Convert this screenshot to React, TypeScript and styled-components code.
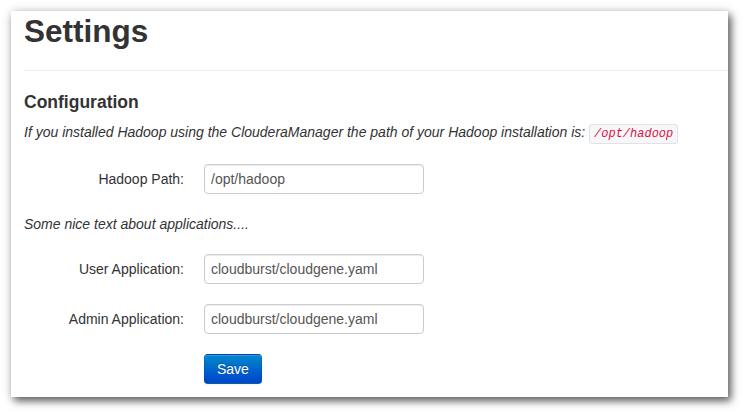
import React from "react";
import styled, { createGlobalStyle } from "styled-components";

const Global = createGlobalStyle`
  html, body { margin: 0; padding: 0; background: #ffffff; }
  body {
    font-family: "Liberation Sans", Arial, Helvetica, sans-serif;
    font-size: 14px;
    line-height: 20px;
    color: #333333;
  }
  * { box-sizing: border-box; }
`;

const Page = styled.div`
  padding: 11px 0 0 11px;
  width: 747px;
  height: 416px;
  overflow: hidden;
`;

const Panel = styled.div`
  width: 717px;
  height: 386px;
  background: #ffffff;
  padding-left: 13px;
  box-shadow: 3px 4px 8px rgba(0, 0, 0, 0.62), 0 0 10px rgba(0, 0, 0, 0.12);
  overflow: hidden;
`;

const PageHeader = styled.div`
  border-bottom: 1px solid #eeeeee;
  margin-bottom: 21px;
`;

const Title = styled.h2`
  margin: 0 0 10px;
  padding-bottom: 9px;
  font-size: 31.5px;
  line-height: 40px;
  font-weight: bold;
  color: #333333;
`;

const SectionTitle = styled.h4`
  margin: 0 0 10px;
  font-size: 17.5px;
  line-height: 20px;
  font-weight: bold;
  color: #333333;
`;

const Note = styled.p<{ $gap: number }>`
  margin: 0 0 ${(p) => p.$gap}px;
  font-style: italic;
`;

const Code = styled.code`
  font-family: "Liberation Mono", "Courier New", monospace;
  font-size: 12px;
  padding: 2px 4px;
  color: #dd1144;
  background: #f7f7f9;
  border: 1px solid #e1e1e8;
  border-radius: 3px;
`;

const ControlGroup = styled.div`
  display: flex;
  align-items: flex-start;
  margin-bottom: 20px;
`;

const Label = styled.label`
  width: 160px;
  padding-top: 5px;
  text-align: right;
  margin-right: 20px;
  color: #333333;
`;

const Input = styled.input`
  width: 220px;
  height: 30px;
  padding: 4px 6px;
  font-family: "Liberation Sans", Arial, sans-serif;
  font-size: 14px;
  line-height: 20px;
  color: #555555;
  background: #ffffff;
  border: 1px solid #cccccc;
  border-radius: 4px;
  box-shadow: inset 0 1px 1px rgba(0, 0, 0, 0.075);
  outline: none;
`;

const Spacer = styled.div`
  width: 180px;
`;

const PrimaryButton = styled.button`
  height: 30px;
  padding: 4px 12px;
  font-family: "Liberation Sans", Arial, sans-serif;
  font-size: 14px;
  line-height: 20px;
  color: #ffffff;
  text-shadow: 0 -1px 0 rgba(0, 0, 0, 0.25);
  background-color: #006dcc;
  background-image: linear-gradient(to bottom, #0088cc, #0044cc);
  border: 1px solid;
  border-color: rgba(0, 0, 0, 0.1) rgba(0, 0, 0, 0.1) rgba(0, 0, 0, 0.25);
  border-radius: 4px;
  box-shadow: inset 0 1px 0 rgba(255, 255, 255, 0.2), 0 1px 2px rgba(0, 0, 0, 0.05);
  cursor: pointer;
`;

export default function App() {
  return (
    <>
      <Global />
      <Page>
        <Panel>
          <PageHeader>
            <Title>Settings</Title>
          </PageHeader>
          <SectionTitle>Configuration</SectionTitle>
          <Note $gap={20}>
            If you installed Hadoop using the ClouderaManager the path of your Hadoop installation is:{" "}
            <Code>/opt/hadoop</Code>
          </Note>
          <ControlGroup>
            <Label>Hadoop Path:</Label>
            <Input defaultValue="/opt/hadoop" />
          </ControlGroup>
          <Note $gap={20}>Some nice text about applications....</Note>
          <ControlGroup>
            <Label>User Application:</Label>
            <Input defaultValue="cloudburst/cloudgene.yaml" />
          </ControlGroup>
          <ControlGroup>
            <Label>Admin Application:</Label>
            <Input defaultValue="cloudburst/cloudgene.yaml" />
          </ControlGroup>
          <ControlGroup>
            <Spacer />
            <PrimaryButton>Save</PrimaryButton>
          </ControlGroup>
        </Panel>
      </Page>
    </>
  );
}
